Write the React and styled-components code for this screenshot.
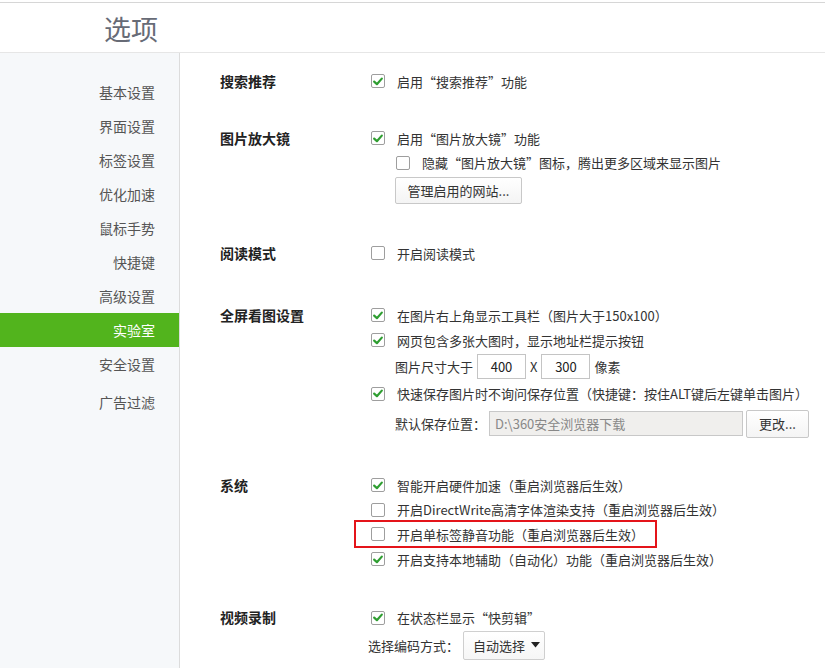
import React from "react";
import styled, { createGlobalStyle } from "styled-components";

const Global = createGlobalStyle`
  html, body { margin: 0; padding: 0; background: #fff; }
  body {
    font-family: "Microsoft YaHei", "Noto Sans CJK SC", "Liberation Sans", sans-serif;
    font-size: 13px;
    color: #333;
    text-spacing-trim: space-all;
    font-feature-settings: "halt" 0, "chws" 0, "palt" 0;
  }
`;

const menu = ["基本设置", "界面设置", "标签设置", "优化加速", "鼠标手势", "快捷键", "高级设置", "实验室", "安全设置", "广告过滤"];

const Check = ({ on }) => (
  <Box>
    {on && (
      <svg width="10" height="9" viewBox="0 0 10 9">
        <path d="M1.2 4.6 L3.9 7.2 L8.8 1.6" fill="none" stroke="#2f9e31" strokeWidth="2.2" strokeLinecap="round" strokeLinejoin="round" />
      </svg>
    )}
  </Box>
);

const Option = ({ on, indent, children, marked }) => (
  <Row $indent={indent} $marked={marked}>
    <Check on={on} />
    <span>{children}</span>
  </Row>
);

export default function App() {
  return (
    <Page>
      <Global />
      <Header>
        <Title>选项</Title>
      </Header>
      <Body>
        <Sidebar>
          {menu.map((m, i) => (
            <MenuItem key={m} $active={m === "实验室"} $last={i === menu.length - 1}>
              {m}
            </MenuItem>
          ))}
        </Sidebar>
        <Main>
          <Section>
            <Label>搜索推荐</Label>
            <Controls>
              <Option on>启用“搜索推荐”功能</Option>
            </Controls>
          </Section>

          <Section $space={32}>
            <Label>图片放大镜</Label>
            <Controls>
              <Option on>启用“图片放大镜”功能</Option>
              <Option indent={25}>隐藏“图片放大镜”图标，腾出更多区域来显示图片</Option>
              <SubLine $indent={24}>
                <Button $w={127} $h={27}>管理启用的网站...</Button>
              </SubLine>
            </Controls>
          </Section>

          <Section $space={35}>
            <Label>阅读模式</Label>
            <Controls>
              <Option>开启阅读模式</Option>
            </Controls>
          </Section>

          <Section $space={37}>
            <Label>全屏看图设置</Label>
            <Controls>
              <Option on>在图片右上角显示工具栏（图片大于150x100）</Option>
              <Option on>网页包含多张大图时，显示地址栏提示按钮</Option>
              <SubLine $indent={24} $gap={4}>
                <span>图片尺寸大于</span>
                <NumInput defaultValue="400" />
                <span>X</span>
                <NumInput defaultValue="300" />
                <span>像素</span>
              </SubLine>
              <Option on>快速保存图片时不询问保存位置（快捷键：按住ALT键后左键单击图片）</Option>
              <SubLine $indent={24} $gap={3} $top={4}>
                <span>默认保存位置：</span>
                <PathInput value="D:\360安全浏览器下载" readOnly />
                <Button $w={63} $h={28}>更改...</Button>
              </SubLine>
            </Controls>
          </Section>

          <Section $space={33}>
            <Label>系统</Label>
            <Controls>
              <Option on>智能开启硬件加速（重启浏览器后生效）</Option>
              <Option>开启DirectWrite高清字体渲染支持（重启浏览器后生效）</Option>
              <Option marked>开启单标签静音功能（重启浏览器后生效）</Option>
              <Option on>开启支持本地辅助（自动化）功能（重启浏览器后生效）</Option>
            </Controls>
          </Section>

          <Section $space={34}>
            <Label>视频录制</Label>
            <Controls>
              <Option on>在状态栏显示“快剪辑”</Option>
              <SubLine $indent={-3} $gap={4} $top={1}>
                <span>选择编码方式：</span>
                <Select>
                  自动选择
                  <svg width="9" height="6" viewBox="0 0 9 6">
                    <path d="M0 0 H9 L4.5 5.5 Z" fill="#222" />
                  </svg>
                </Select>
              </SubLine>
            </Controls>
          </Section>
        </Main>
      </Body>
    </Page>
  );
}

const Page = styled.div`
  width: 825px;
  height: 668px;
  overflow: hidden;
  display: flex;
  flex-direction: column;
`;

const Header = styled.div`
  height: 51px;
  box-sizing: border-box;
  margin-top: 2px;
  border-top: 1px solid #d6d6d6;
  border-bottom: 1px solid #e6e6e6;
  display: flex;
  align-items: center;
  padding-left: 104px;
`;

const Title = styled.div`
  font-size: 27px;
  color: #676b76;
  margin-top: 2px;
`;

const Body = styled.div`
  flex: 1;
  display: flex;
`;

const Sidebar = styled.div`
  width: 179px;
  background: #f6f8fa;
  border-right: 1px solid #dcdcdc;
  padding-top: 22px;
  display: flex;
  flex-direction: column;
`;

const MenuItem = styled.div`
  height: 34px;
  line-height: 34px;
  text-align: right;
  padding-right: 24px;
  font-size: 14px;
  color: ${(p) => (p.$active ? "#fff" : "#555")};
  background: ${(p) => (p.$active ? "#52b41d" : "transparent")};
  margin-top: ${(p) => (p.$last ? "4px" : "0")};
`;

const Main = styled.div`
  flex: 1;
  padding: 16px 0 0 40px;
  display: flex;
  flex-direction: column;
`;

const Section = styled.div`
  display: flex;
  margin-top: ${(p) => p.$space || 0}px;
`;

const Label = styled.div`
  width: 151px;
  height: 25px;
  line-height: 25px;
  font-size: 14px;
  font-weight: bold;
  color: #222;
  flex-shrink: 0;
`;

const Controls = styled.div`
  display: flex;
  flex-direction: column;
`;

const Row = styled.div`
  position: relative;
  height: 24.6px;
  display: flex;
  align-items: center;
  gap: 12px;
  padding-left: ${(p) => p.$indent || 0}px;
  white-space: nowrap;
  color: #333;
  ${(p) =>
    p.$marked &&
    `
    &::after {
      content: "";
      position: absolute;
      left: -17px;
      top: -2px;
      width: 303px;
      height: 28px;
      border: 2px solid #e4141a;
      box-sizing: border-box;
    }
  `}
`;

const Box = styled.span`
  width: 14px;
  height: 14px;
  box-sizing: border-box;
  border: 1px solid #9e9e9e;
  border-radius: 2px;
  background: #fff;
  display: flex;
  align-items: center;
  justify-content: center;
  flex-shrink: 0;
`;

const SubLine = styled.div`
  display: flex;
  align-items: center;
  gap: ${(p) => p.$gap || 0}px;
  margin: ${(p) => (p.$top != null ? p.$top : 2)}px 0 2px ${(p) => p.$indent || 0}px;
  color: #333;
  white-space: nowrap;
`;

const Button = styled.button`
  width: ${(p) => p.$w}px;
  height: ${(p) => p.$h}px;
  border: 1px solid #c8c8c8;
  border-radius: 2px;
  background: linear-gradient(#ffffff, #f4f4f4);
  font-family: inherit;
  font-size: 13px;
  color: #333;
  padding: 0;
`;

const NumInput = styled.input`
  width: 49px;
  height: 25px;
  box-sizing: border-box;
  border: 1px solid #c4c4c4;
  text-align: center;
  font-family: inherit;
  font-size: 13px;
  color: #222;
  outline: none;
`;

const PathInput = styled.input`
  width: 254px;
  height: 25px;
  box-sizing: border-box;
  border: 1px solid #c8c8c8;
  background: #f0efed;
  color: #888;
  font-family: inherit;
  font-size: 13px;
  padding: 0 5px;
  outline: none;
`;

const Select = styled.div`
  width: 82px;
  height: 29px;
  box-sizing: border-box;
  border: 1px solid #cfcfcf;
  border-radius: 2px;
  background: linear-gradient(#ffffff, #f6f6f6);
  display: flex;
  align-items: center;
  gap: 6px;
  padding-left: 9px;
  color: #333;
`;
